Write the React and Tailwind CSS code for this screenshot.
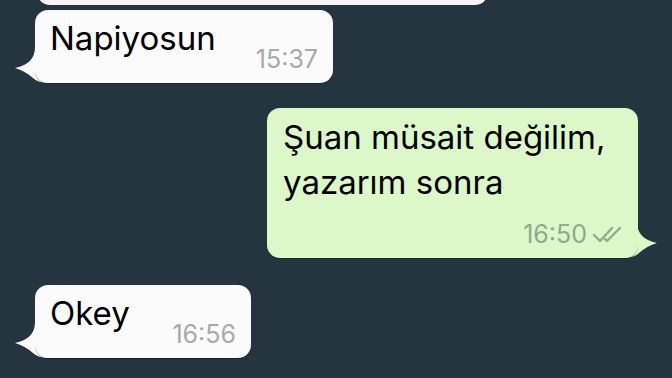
import React from "react";

function TailLeft() {
  return (
    <svg
      className="absolute left-[-20px] bottom-0"
      width="34"
      height="36"
      viewBox="0 0 34 36"
    >
      <path d="M20 0 Q20 17 0 21 Q10 24 18 31 Q23 36 34 36 L34 0 Z" fill="#fbfbfb" />
    </svg>
  );
}

function TailRight() {
  return (
    <svg
      className="absolute right-[-19px] bottom-0"
      width="34"
      height="36"
      viewBox="0 0 34 36"
    >
      <path d="M14 0 Q14 17 34 21 Q24 24 16 31 Q11 36 0 36 L0 0 Z" fill="#dcf7c8" />
    </svg>
  );
}

function DoubleCheck() {
  return (
    <svg width="34" height="17" viewBox="0 0 34 17" fill="none">
      <path d="M2 9 L8 15 L20 2" stroke="#93a88f" strokeWidth="2.4" strokeLinecap="round" strokeLinejoin="round" />
      <path d="M13 13 L15 15 L28 2" stroke="#93a88f" strokeWidth="2.4" strokeLinecap="round" strokeLinejoin="round" />
    </svg>
  );
}

function Incoming({ text, time, width }) {
  return (
    <div className="relative ml-[35px] self-start">
      <TailLeft />
      <div
        className={`relative flex h-[73px] items-start justify-between rounded-[13px] bg-[#fbfbfb] pl-[15px] pr-[15px] pt-[8px] shadow-[0_1px_0_rgba(0,0,0,0.35)] ${width}`}
      >
        <span className="text-[33px] leading-[40px] text-black">{text}</span>
        <span className="mt-[27px] text-[25px] leading-[28px] text-[#a9a9a9]">{time}</span>
      </div>
    </div>
  );
}

export default function App() {
  return (
    <div
      className="flex h-[378px] w-[672px] flex-col overflow-hidden bg-[#253540]"
      style={{ fontFamily: "Inter, 'Liberation Sans', sans-serif" }}
    >
      <div className="ml-[37px] mt-[-40px] h-[45px] w-[451px] shrink-0 rounded-[13px] bg-[#f7f5f7]" />

      <div className="mt-[5px]">
        <Incoming text="Napiyosun" time="15:37" width="w-[298px]" />
      </div>

      <div className="relative ml-[267px] mt-[25px] h-[150px] w-[371px] shrink-0">
        <TailRight />
        <div className="relative flex h-full flex-col rounded-[13px] bg-[#dcf7c8] pl-[16px] pr-[12px] pt-[7px] shadow-[0_1px_0_rgba(0,0,0,0.3)]">
          <p className="text-[33px] leading-[45px] text-black">
            Şuan müsait değilim,
            <br />
            yazarım sonra
          </p>
          <div className="mt-auto mb-[10px] flex items-center justify-end gap-[5px]">
            <span className="text-[25px] leading-[28px] text-[#93a88f]">16:50</span>
            <DoubleCheck />
          </div>
        </div>
      </div>

      <div className="mt-[27px]">
        <Incoming text="Okey" time="16:56" width="w-[216px]" />
      </div>
    </div>
  );
}
